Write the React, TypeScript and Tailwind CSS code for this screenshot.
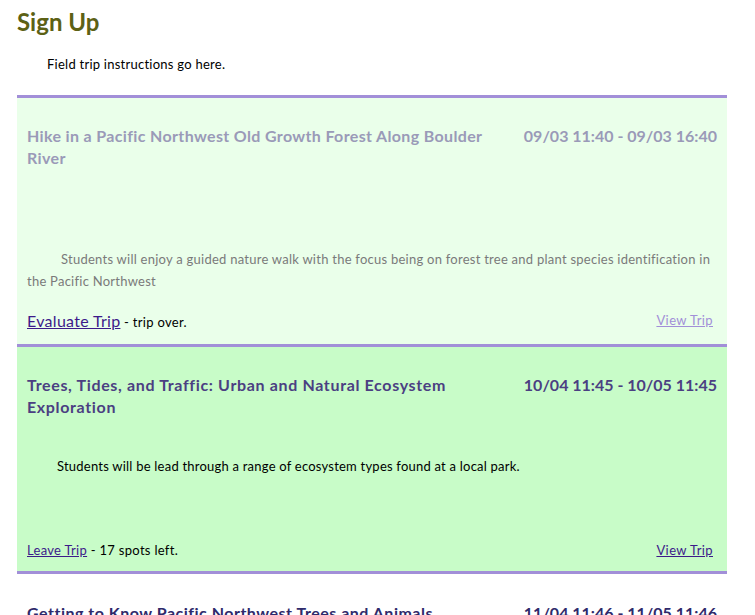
const trips = [
  {
    title: "Hike in a Pacific Northwest Old Growth Forest Along Boulder River",
    dates: "09/03 11:40 - 09/03 16:40",
    description:
      "Students will enjoy a guided nature walk with the focus being on forest tree and plant species identification in the Pacific Northwest",
  },
  {
    title: "Trees, Tides, and Traffic: Urban and Natural Ecosystem Exploration",
    dates: "10/04 11:45 - 10/05 11:45",
    description: "Students will be lead through a range of ecosystem types found at a local park.",
  },
  {
    title: "Getting to Know Pacific Northwest Trees and Animals",
    dates: "11/04 11:46 - 11/05 11:46",
  },
];

export default function App() {
  return (
    <div className="min-h-screen bg-white px-[17px] pt-[6px] font-['Lato','Open_Sans',sans-serif] text-black">
      {/* Header */}
      <h1 className="text-[24px] font-bold leading-[32px] text-[#5c6115]">Sign Up</h1>
      <p className="mt-[16px] pl-[30px] text-[13px] leading-[20px] tracking-[0.25px]">Field trip instructions go here.</p>

      <div className="mt-[21px] w-[710px]">
        {/* Past trip */}
        <div className="border-t-[3px] border-[#a28fd8] bg-[#eaffea] px-[10px]">
          <div className="flex items-start justify-between gap-[24px] pt-[27px]">
            <h2 className="text-[16px] font-bold leading-[22px] tracking-[0.35px] text-[#9a9ab8]">{trips[0].title}</h2>
            <span className="whitespace-nowrap text-[16px] font-bold leading-[22px] text-[#9a9ab8]">
              {trips[0].dates}
            </span>
          </div>
          <p className="mt-[79px] indent-[34px] text-[13px] leading-[22px] tracking-[0.25px] text-[#7a7a7a]">
            {trips[0].description}
          </p>
          <div className="flex items-center justify-between pb-[11px] pr-[4px] pt-[17px]">
            <span className="text-[13px] tracking-[0.3px]">
              <a href="#" className="text-[16px] text-[#3d1a8a] underline">
                Evaluate Trip
              </a>{" "}
              - trip over.
            </span>
            <a href="#" className="text-[13px] tracking-[0.4px] text-[#a28fd8] underline">
              View Trip
            </a>
          </div>
        </div>

        {/* Signed up trip */}
        <div className="border-t-[3px] border-[#a28fd8] bg-[#c8fcc8] px-[10px]">
          <div className="flex items-start justify-between gap-[24px] pt-[27px]">
            <h2 className="text-[16px] font-bold leading-[22px] tracking-[0.65px] text-[#4b3f82]">{trips[1].title}</h2>
            <span className="whitespace-nowrap text-[16px] font-bold leading-[22px] text-[#4b3f82]">
              {trips[1].dates}
            </span>
          </div>
          <p className="mt-[37px] pl-[30px] text-[13px] leading-[22px] tracking-[0.22px]">{trips[1].description}</p>
          <div className="flex items-center justify-between pb-[10px] pr-[4px] pt-[62px] text-[13px] leading-[22px] tracking-[0.3px]">
            <span>
              <a href="#" className="text-[#3d1a8a] underline">
                Leave Trip
              </a>{" "}
              - 17 spots left.
            </span>
            <a href="#" className="tracking-[0.4px] text-[#3d1a8a] underline">
              View Trip
            </a>
          </div>
        </div>

        {/* Upcoming trip */}
        <div className="border-t-[3px] border-[#a28fd8] bg-white px-[10px]">
          <div className="flex items-start justify-between gap-[24px] pt-[28px]">
            <h2 className="text-[16px] font-bold leading-[22px] tracking-[0.5px] text-[#2f2a6b]">{trips[2].title}</h2>
            <span className="whitespace-nowrap text-[16px] font-bold leading-[22px] text-[#2f2a6b]">
              {trips[2].dates}
            </span>
          </div>
        </div>
      </div>
    </div>
  );
}
